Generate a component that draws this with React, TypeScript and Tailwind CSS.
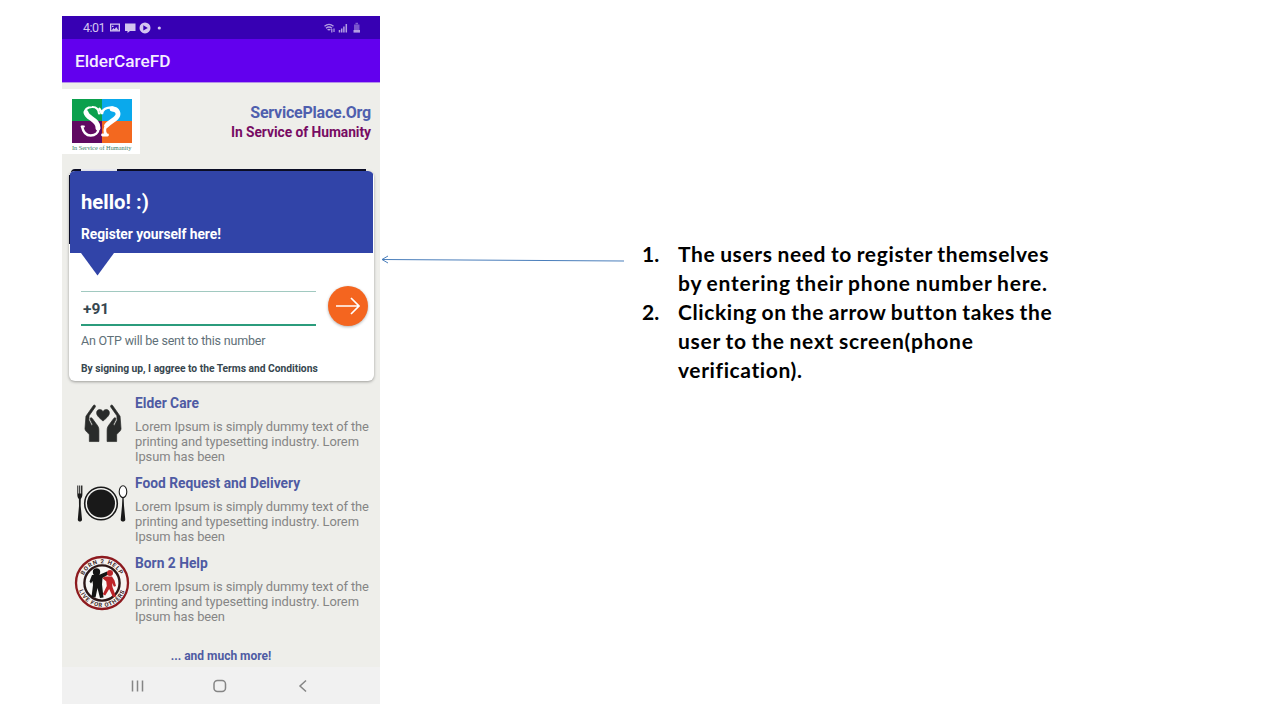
import type { ReactNode } from "react";

const lorem = ["Lorem Ipsum is simply dummy text of the", "printing and typesetting industry. Lorem", "Ipsum has been"];

function StatusBar() {
  return (
    <div className="flex h-[23px] shrink-0 items-center bg-[#3700b3] pl-[21px] pr-[19px] text-[#d3c5f0]">
      <span className="w-[27px] pt-px text-[12.500px] leading-none tracking-[-0.5px]">4:01</span>
      <svg className="h-[12px] w-[52px]" viewBox="0 0 52 12" fill="currentColor">
        <path fillRule="evenodd" d="M0 1.500h10v8H0zM1.300 2.800v5.400h7.400V2.800z" />
        <path d="M1.600 8.500 3.400 6l1.300 1.300L6.200 5l2.300 3.500zM2 3.800h1.500v1.300H2z" />
        <path d="M15 1.500h10.500v7.500h-5.500l-2.500 2V9H15z" />
        <path fillRule="evenodd" d="M35 .4a5.500 5.500 0 1 1 0 11A5.500 5.500 0 0 1 35 .4zM33.300 3.300v5.200L37.800 5.900z" />
        <circle cx="49.300" cy="6" r="1.600" />
      </svg>
      <svg className="ml-auto h-[12px] w-[37px]" viewBox="0 0 37 12" fill="none" stroke="currentColor" opacity=".8">
        <path d="M.5 4.200Q5 .6 9.500 4.200M2 6.200q3-2.400 6 0M3.600 8q1.400-1.200 2.800 0" strokeWidth="1.400" />
        <path d="M7.800 7v3.500M10 6.500v3.500" strokeWidth="1.200" />
        <path d="M15.500 8v2.500M17.700 6.500v4M19.900 4.500v6M22.300 2v8.500" strokeWidth="1.500" />
        <path d="M30 2.500h5.500v6H30z" fill="currentColor" stroke="none" opacity=".55" />
        <path d="M31.500 1.500h2.500" strokeWidth="1.500" opacity=".6" />
        <path d="M29.500 9.300h6.500" strokeWidth="2.600" />
      </svg>
    </div>
  );
}

function Logo() {
  return (
    <div className="h-[65px] w-[78px] bg-white pl-[10px] pt-[10px]">
      <svg className="h-[44px] w-[60px]" viewBox="0 0 60 44">
        <path fill="#0ba04d" d="M0 0h30v22H0z" />
        <path fill="#0aa9ec" d="M30 0h30v22H30z" />
        <path fill="#600a62" d="M0 22h30v22H0z" />
        <path fill="#f3681f" d="M30 22h30v22H30z" />
        <g fill="none" stroke="#fff" strokeLinecap="round">
          <path strokeWidth="2.200" d="M27 14.500C26.500 9.500 23.500 7.800 20 8c-5 0-7.500 3-7 6" />
          <path strokeWidth="5" d="M14 13.500c1 6 12.500 7 12 15.500" />
          <path strokeWidth="2.500" d="M26.500 29c0 5-3.500 7.500-7.800 7.500-5 0-7.500-3.500-8.500-8.500" />
          <path strokeWidth="1.800" d="M9.500 27.500h2.500" />
          <path strokeWidth="2.600" d="M27.500 10c1 1.200 2 3.500 2.300 5 .5-4.500 5-7 11-6.500" />
          <path strokeWidth="4.800" d="M40 10c6 0 7.500 5 4.500 8.500-3 3-7 4.500-10 8" />
          <path strokeWidth="2.800" d="M35.500 26c-3.500 3-3 7-1.500 9.500M30.500 36h5" />
        </g>
      </svg>
      <div className="mt-[1px] whitespace-nowrap font-['Liberation_Serif',serif] text-[6.300px] leading-[7px] text-[#397b63]">In Service of Humanity</div>
    </div>
  );
}

function HandsIcon() {
  return (
    <svg className="ml-[22px] mt-[9px] h-[39px] w-[38px]" viewBox="0 0 38 40" fill="#292b2a" stroke="#292b2a" strokeWidth=".7" strokeLinejoin="round">
      <path d="M19 17.500C15 14 12 11.500 12.500 8.500c.5-3.700 5-3.700 6.500-.8 1.500-2.900 6-2.900 6.500.8.500 3-2.500 5.500-6.500 9z" />
      <path d="M9.200 1.500 1.500 12.500.5 25.500c0 2.500 3 3.500 4.500 6V38.500h9.800V27c0-3-1-4.500-3-7L8 14.800c-1.200-1.500-3-.5-2 1.300l2.500 5.200L7.300 22l-2.800-5.500.3-4.500 6.300-9c.8-1.200-1-2.700-1.900-1.500z" />
      <path d="m28.800 1.500 7.700 11 1 13c0 2.500-3 3.500-4.500 6V38.500h-9.800V27c0-3 1-4.500 3-7l3.800-5.200c1.200-1.500 3-.5 2 1.300l-2.500 5.200 1.200.7 2.800-5.500-.3-4.500-6.300-9c-.8-1.200 1-2.700 1.900-1.500z" />
    </svg>
  );
}

function PlateIcon() {
  return (
    <svg className="ml-[15px] mt-[9px] h-[40px] w-[51px]" viewBox="0 0 51 40" fill="#191919">
      <circle cx="24" cy="19.500" r="16.300" fill="#f4f4f2" stroke="#191919" strokeWidth="1.600" />
      <circle cx="24" cy="19.500" r="14" />
      <path d="M.3 1.500h1v8h.9v-8h1v8h.9v-8h1.300v8.500c0 3-1 4-1.600 5l-.1 7L5 35.500c0 2.700-4.200 2.700-4.200 0L2 22l-.1-7C1 14 .3 13 .3 10z" />
      <ellipse cx="46" cy="7.700" rx="3.800" ry="5.900" fill="#fff" stroke="#191919" strokeWidth="1.100" />
      <path d="M45.400 13.300h1.200l.4 8.500 1.300 13.700c0 2.700-4.600 2.700-4.600 0L45 21.800z" />
    </svg>
  );
}

function BornIcon() {
  return (
    <svg className="ml-[12px] h-[56px] w-[56px]" viewBox="0 0 56 56">
      <defs>
        <path id="arcTop" d="M8.300 28a19.700 19.700 0 0 1 39.400 0" />
        <path id="arcBottom" d="M4 28a24 24 0 0 0 48 0" />
      </defs>
      <circle cx="28" cy="28" r="26" fill="#f6f2f0" stroke="#8d1a1f" strokeWidth="2.300" />
      <circle cx="28" cy="28" r="17.600" fill="#f8f8f6" stroke="#2d1717" strokeWidth="2.400" />
      <g fill="#3a2525" fontSize="5.800" fontWeight="700" textAnchor="middle">
        <text letterSpacing=".9"><textPath href="#arcTop" startOffset="50%">BORN 2 HELP</textPath></text>
        <text letterSpacing=".8"><textPath href="#arcBottom" startOffset="50%">LIVE FOR OTHERS</textPath></text>
      </g>
      <circle cx="22.500" cy="17" r="3.700" fill="#141414" />
      <path fill="#141414" d="m18 20 8-.5 7-3 2 2.500-6.500 4-.5 6.500 1.500 13-3.500.5L23.500 33l-2 9.500-4-.5 1.500-12-.5-4-1.500 2.500-1.500-2z" />
      <circle cx="36" cy="18" r="3" fill="#bd2428" />
      <path fill="#bd2428" d="m31.500 21.500 6.500 0 2.500 4 1.500 5.500-2 .8-2-3.800.5 4 3.500 9.500-3 .8-3.800-8.300-4 6.500-2.400-1.200 4-8.300-.5-4.500-4-3.500z" />
    </svg>
  );
}

function Service({ title, icon }: { title: string; icon: ReactNode }) {
  return (
    <section className="flex h-[80px]">
      <div className="w-[73px] shrink-0">{icon}</div>
      <div className="whitespace-nowrap">
        <h3 className="text-[13.800px] font-bold leading-[16px] text-[#4f5ba3]">{title}</h3>
        <p className="mt-[8px] text-[12.900px] leading-[15px] tracking-[-0.08px] text-[#858585]">
          {lorem.map((line) => (
            <span key={line} className="block">{line}</span>
          ))}
        </p>
      </div>
    </section>
  );
}

function RegisterCard() {
  return (
    <section className="relative ml-[7px] mt-[15px] h-[212px] w-[306px]">
      <div className="absolute left-[2px] top-0 h-[6px] w-[295px] rounded-tl bg-[#0c0e26]" />
      <div className="absolute left-[12px] top-0 h-[2px] w-[36px] bg-[#e9eaf3]" />
      <div className="relative mt-[2px] flex h-[210px] w-[305px] flex-col overflow-hidden rounded-[6px] bg-white shadow-[0_1px_3px_rgba(0,0,0,0.35)]">
        <div className="ml-[1px] h-[82px] w-[303px] shrink-0 rounded-tr-[3px] bg-[#3144a8] pl-[11px] text-white">
          <h2 className="pt-[19px] text-[20.300px] font-bold leading-[24px]">hello! :)</h2>
          <p className="mt-[12px] text-[13.800px] font-bold leading-[16px] tracking-[-0.04px]">Register yourself here!</p>
        </div>
        <svg className="ml-[12px] h-[23px] w-[34px] shrink-0" viewBox="0 0 34 23">
          <path fill="#3144a8" d="M0 0h33L16.500 22.500z" />
        </svg>
        <div className="flex pl-[12px] pr-[6px]">
          <div className="mt-[15px] flex h-[35px] w-[235px] items-center border-b-2 border-t border-b-[#2b9c7c] border-t-[#a1c9c0] pl-[2px] pt-[4px] text-[15.500px] font-bold text-[#37474f]">+91</div>
          <button className="ml-auto mt-[10px] flex h-[40px] w-[40px] items-center justify-center rounded-full bg-[#f4651f] shadow-[0_1px_3px_rgba(0,0,0,0.3)]">
            <svg className="h-[18px] w-[26px]" viewBox="0 0 26 18" fill="none" stroke="#fff" strokeWidth="1.700">
              <path d="M1 9h23M16 1l8 8-8 8" />
            </svg>
          </button>
        </div>
        <p className="pl-[12px] pt-[7px] text-[12.500px] leading-[16px] tracking-[-0.2px] text-[#607078]">An OTP will be sent to this number</p>
        <p className="pl-[12px] pt-[13px] text-[10.300px] font-bold leading-[14px] tracking-[-0.03px] text-[#37474f]">By signing up, I aggree to the Terms and Conditions</p>
      </div>
      <div className="absolute left-0 top-[6px] h-[69px] w-[1px] bg-[#0c0e26]" />
    </section>
  );
}

function Phone() {
  return (
    <main className="flex h-[688px] w-[318px] shrink-0 flex-col overflow-hidden whitespace-nowrap bg-[#eeeeea]">
      <StatusBar />
      <h1 className="flex h-[44px] shrink-0 items-center border-b border-[#b491e8] bg-[#6200ee] pl-[13px] pt-[2px] text-[17.200px] font-medium text-[#f5edff]">ElderCareFD</h1>
      <header className="mt-[6px] flex justify-between pr-[9px]">
        <Logo />
        <div className="pt-[14px] text-right">
          <p className="text-[16px] font-bold leading-[19px] tracking-[-0.23px] text-[#4f5fae]">ServicePlace.Org</p>
          <p className="mt-[2px] text-[13.800px] font-bold leading-[16px] tracking-[-0.04px] text-[#770b63]">In Service of Humanity</p>
        </div>
      </header>
      <RegisterCard />
      <div className="mt-[14px]">
        <Service title="Elder Care" icon={<HandsIcon />} />
        <Service title="Food Request and Delivery" icon={<PlateIcon />} />
        <Service title="Born 2 Help" icon={<BornIcon />} />
      </div>
      <p className="mt-[13px] text-center text-[12px] font-bold leading-[16px] text-[#4f5ba3]">... and much more!</p>
      <nav className="mt-auto flex h-[37px] shrink-0 items-center bg-[#f1f1f1] pl-[69px]">
        <svg className="h-[14px] w-[180px]" viewBox="0 0 180 14" fill="none" stroke="#858585" strokeWidth="1.500">
          <path d="M1.500 1.500v11M6.500 1.500v11M11.500 1.500v11" />
          <rect x="83" y="1.500" width="11.500" height="11" rx="3.500" />
          <path d="m175 1.500-6 5.500 6 5.500" />
        </svg>
      </nav>
    </main>
  );
}

const listItems = [
  [
    { text: "The users need to register themselves", spacing: "tracking-[0.64px]" },
    { text: "by entering their phone number here.", spacing: "tracking-[0.78px]" },
  ],
  [
    { text: "Clicking on the arrow button takes the", spacing: "tracking-[0.6px]" },
    { text: "user to the next screen(phone", spacing: "tracking-[0.74px]" },
    { text: "verification).", spacing: "tracking-[0.6px]" },
  ],
];

export default function App() {
  return (
    <div className="flex h-[720px] w-[1280px] items-start overflow-hidden bg-white pl-[62px] pt-[16px] font-['Roboto',sans-serif]">
      <Phone />
      <svg className="mt-[238px] h-[12px] w-[245px] shrink-0" viewBox="0 0 245 12" fill="none" stroke="#4a7ebb" strokeWidth="1">
        <path d="M2 5.500 244 7M8 2 2 5.500 8 9" />
      </svg>
      <ol className="ml-[17px] mt-[223px] whitespace-nowrap font-['Lato',sans-serif] text-[21px] font-bold leading-[29px] text-black [word-spacing:-1px]">
        {listItems.map((lines, index) => (
          <li key={index} className="flex">
            <span className="w-[36px]">{index + 1}.</span>
            <span>
              {lines.map((line) => (
                <span key={line.text} className={`block ${line.spacing}`}>{line.text}</span>
              ))}
            </span>
          </li>
        ))}
      </ol>
    </div>
  );
}
